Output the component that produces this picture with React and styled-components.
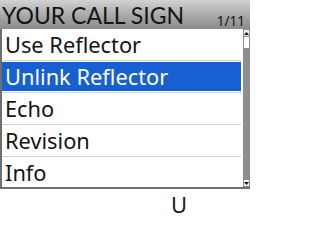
import styled, { createGlobalStyle } from "styled-components";

const GlobalStyle = createGlobalStyle`
  html, body {
    margin: 0;
    padding: 0;
    background: #ffffff;
  }
  body {
    font-family: "Noto Sans", "Open Sans", sans-serif;
  }
`;

const Screen = styled.div`
  width: 250px;
  height: 219px;
  background: #ffffff;
  display: flex;
  flex-direction: column;
  overflow: hidden;
`;

const Header = styled.div`
  height: 29px;
  display: flex;
  align-items: flex-end;
  justify-content: space-between;
  padding: 0 5px 0 2px;
  background: linear-gradient(#d2d2d2, #a8a8a8 55%, #8a8a8a);
  color: #141414;
  box-sizing: border-box;
`;

const Title = styled.div`
  font-family: "Lato", "Noto Sans", sans-serif;
  font-size: 23px;
  line-height: 27px;
`;

const Page = styled.div`
  font-size: 13.5px;
  line-height: 14px;
  padding-bottom: 1px;
`;

const Body = styled.div`
  display: flex;
  height: 158px;
  border-left: 2px solid #6e6e6e;
  border-bottom: 2px solid #6e6e6e;
`;

const List = styled.div`
  flex: 1;
  display: flex;
  flex-direction: column;
  padding-right: 2px;
`;

const Row = styled.div`
  height: 31px;
  flex-shrink: 0;
  display: flex;
  align-items: stretch;
  border-bottom: ${(p) => (p.$last ? "none" : "1px solid #d4d4d4")};
`;

const Label = styled.div`
  flex: 1;
  display: flex;
  align-items: center;
  padding-left: 3px;
  font-size: 21.8px;
  color: ${(p) => (p.$active ? "#ffffff" : "#141414")};
  background: ${(p) => (p.$active ? "#1660d2" : "transparent")};
  margin: ${(p) => (p.$active ? "1px 0" : "0")};
`;

const Scrollbar = styled.div`
  width: 7px;
  display: flex;
  flex-direction: column;
  background: #8e8e8e;
`;

const Arrow = styled.div`
  height: 8px;
  background: #f2f2f2;
  border: 1px solid #8e8e8e;
  box-sizing: border-box;
  display: flex;
  align-items: center;
  justify-content: center;
`;

const Thumb = styled.div`
  height: 11px;
  margin: 0 1px;
  background: #ffffff;
`;

const Track = styled.div`
  flex: 1;
`;

const Footer = styled.div`
  flex: 1;
  padding-left: 171px;
  font-size: 22px;
  line-height: 30px;
  color: #1a1a1a;
`;

const Tri = ({ down }) => (
  <svg width="5" height="3" viewBox="0 0 5 3">
    <polygon points={down ? "0,0 5,0 2.5,3" : "0,3 5,3 2.5,0"} fill="#111" />
  </svg>
);

const items = ["Use Reflector", "Unlink Reflector", "Echo", "Revision", "Info"];

export default function App() {
  return (
    <Screen>
      <GlobalStyle />
      <Header>
        <Title>YOUR CALL SIGN</Title>
        <Page>1/11</Page>
      </Header>
      <Body>
        <List>
          {items.map((item, i) => (
            <Row key={item} $last={i === items.length - 1}>
              <Label $active={i === 1}>{item}</Label>
            </Row>
          ))}
        </List>
        <Scrollbar>
          <Arrow>
            <Tri />
          </Arrow>
          <Thumb />
          <Track />
          <Arrow>
            <Tri down />
          </Arrow>
        </Scrollbar>
      </Body>
      <Footer>U</Footer>
    </Screen>
  );
}
